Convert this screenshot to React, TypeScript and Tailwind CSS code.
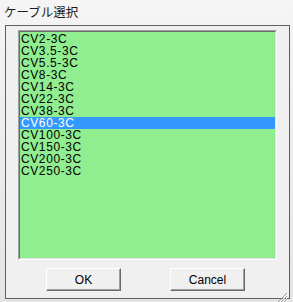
import { useState } from "react";

const cables = [
  "CV2-3C",
  "CV3.5-3C",
  "CV5.5-3C",
  "CV8-3C",
  "CV14-3C",
  "CV22-3C",
  "CV38-3C",
  "CV60-3C",
  "CV100-3C",
  "CV150-3C",
  "CV200-3C",
  "CV250-3C",
];

const uiFont = { fontFamily: '"Liberation Sans", "Noto Sans CJK JP", sans-serif' };

const Win7Button = ({ label }: { label: string }) => (
  <div className="w-[75px] h-[23px] flex items-center justify-center bg-[#f0f0f0] border border-t-white border-l-white border-r-[#696969] border-b-[#696969] text-[12px] text-black shadow-[inset_-1px_-1px_0_#a0a0a0]">
    {label}
  </div>
);

const App = () => {
  const [selected, setSelected] = useState<number>(7);

  return (
    <div className="w-[293px] h-[302px] bg-gradient-to-b from-[#f5f5f5] via-[#ececec] to-[#e4e4e4] flex flex-col overflow-hidden" style={uiFont}>
      <div className="h-[25px] pl-[4px] pt-[3px] text-[12.5px] text-[#1a1a1a] leading-[18px]" style={{ fontFamily: '"Noto Sans CJK JP", sans-serif' }}>
        ケーブル選択
      </div>
      <div className="ml-[5px] mr-[3px] h-[274px] bg-[#f0f0f0] border border-[#5f5f5f] flex flex-col">
        <div className="pl-[12px] pt-[4px]">
          <div className="w-[259px] h-[230px] border border-t-[#a0a0a0] border-l-[#a0a0a0] border-r-white border-b-white">
            <div className="w-full h-full bg-[#90ee90] border border-t-[#696969] border-l-[#696969] border-r-[#e3e3e3] border-b-[#e3e3e3] pt-[1px]">
              {cables.map((c, i) => (
                <div
                  key={c}
                  onClick={() => setSelected(i)}
                  className={
                    i === selected
                      ? "h-[12px] leading-[12px] pl-[1px] text-[12px] tracking-[0.6px] bg-[#3399ff] text-white overflow-hidden"
                      : "h-[12px] leading-[12px] pl-[1px] text-[12px] tracking-[0.6px] text-black overflow-hidden"
                  }
                >
                  {c}
                </div>
              ))}
            </div>
          </div>
        </div>
        <div className="flex flex-row pl-[40px] pt-[8px] gap-[49px]">
          <Win7Button label="OK" />
          <Win7Button label="Cancel" />
        </div>
        <div className="flex justify-end mt-auto pr-[1px] pb-[1px]">
          <svg width="12" height="12" viewBox="0 0 12 12">
            <path d="M11 2 L2 11 M11 5 L5 11 M11 8 L8 11" stroke="#9a9a9a" strokeWidth="1" />
            <path d="M12 3 L3 12 M12 6 L6 12 M12 9 L9 12" stroke="#ffffff" strokeWidth="1" />
          </svg>
        </div>
      </div>
    </div>
  );
};

export default App;
